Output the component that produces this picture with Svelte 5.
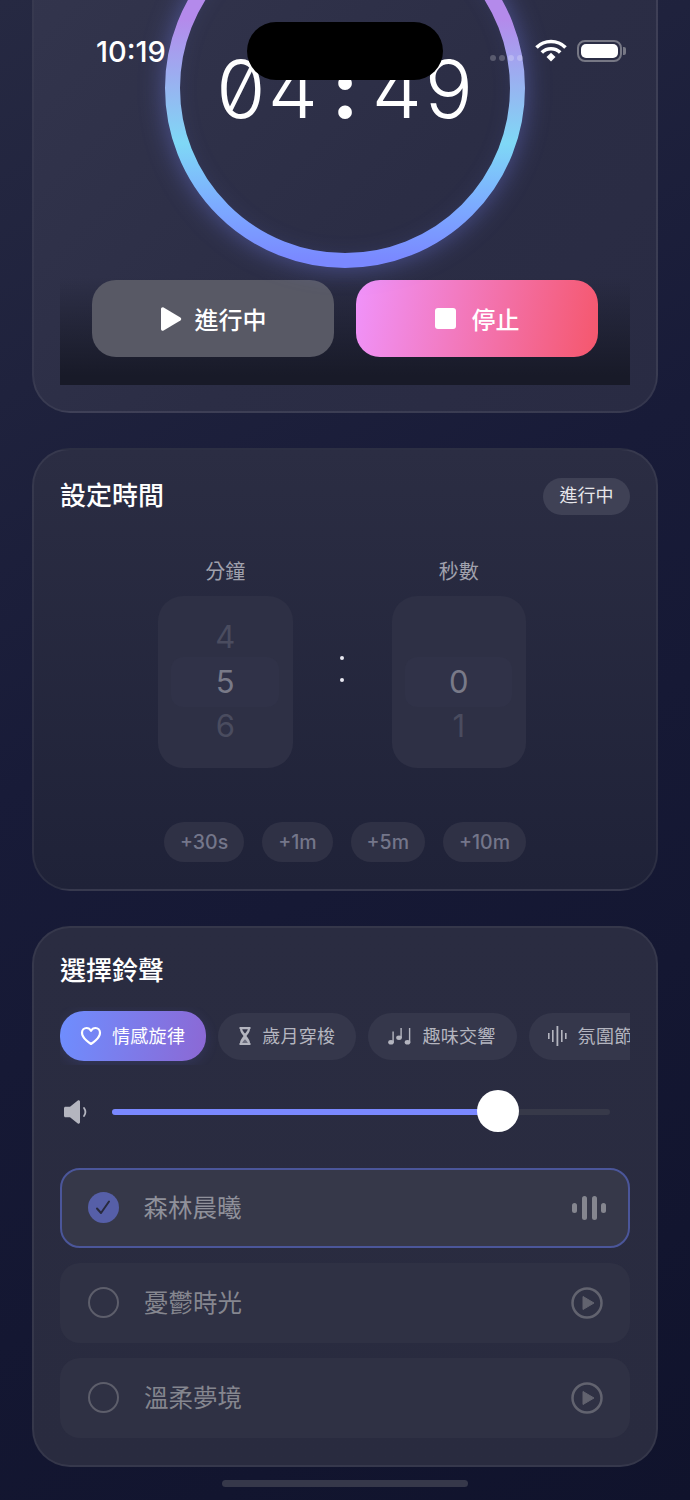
<script>
  const presets = ['+30s', '+1m', '+5m', '+10m'];
  const timeChars = ['0', '4', ':', '4', '9'];
  const sounds = [
    { name: '森林晨曦', active: true },
    { name: '憂鬱時光', active: false },
    { name: '溫柔夢境', active: false }
  ];
</script>

<div class="page">
  <section class="card timer-card">
    <div class="ring">
      <svg class="ring-svg" viewBox="0 0 360 360" width="360" height="360">
        <defs>
          <linearGradient id="ringGrad" x1="0" y1="0" x2="0" y2="1">
            <stop offset="0.3" stop-color="#b48aeb" />
            <stop offset="0.66" stop-color="#7fd8f6" />
            <stop offset="0.84" stop-color="#7cabff" />
            <stop offset="1" stop-color="#7a88ff" />
          </linearGradient>
        </defs>
        <circle cx="180" cy="180" r="172.500" fill="none" stroke="url(#ringGrad)" stroke-width="15" />
      </svg>
      <div class="time">
        {#each timeChars as c}
          <span class:sep={c === ':'}>{c}</span>
        {/each}
      </div>
    </div>
    <div class="actions">
      <button class="btn btn-run">
        <svg width="22" height="26" viewBox="0 0 22 26"><path d="M1 3c0-1.400 1.400-2.200 2.600-1.500l16.800 10c1.100.7 1.100 2.300 0 3L3.600 24.500C2.400 25.200 1 24.400 1 23z" fill="#fff" /></svg>
        <span>進行中</span>
      </button>
      <button class="btn btn-stop">
        <span class="stop-square"></span>
        <span>停止</span>
      </button>
    </div>
  </section>

  <section class="card set-card">
    <header class="head">
      <h2>設定時間</h2>
      <span class="pill">進行中</span>
    </header>
    <div class="picker">
      <div class="col">
        <div class="label">分鐘</div>
        <div class="wheel">
          <div class="hl"></div>
          <div class="n dim">4</div>
          <div class="n cur">5</div>
          <div class="n dim">6</div>
        </div>
      </div>
      <div class="colon"><i></i><i></i></div>
      <div class="col">
        <div class="label">秒數</div>
        <div class="wheel">
          <div class="hl"></div>
          <div class="n dim"></div>
          <div class="n cur">0</div>
          <div class="n dim">1</div>
        </div>
      </div>
    </div>
    <div class="presets">
      {#each presets as p}
        <button class="preset">{p}</button>
      {/each}
    </div>
  </section>

  <section class="card sound-card">
    <h2>選擇鈴聲</h2>
    <div class="tabs">
      <button class="tab on">
        <svg width="22" height="20" viewBox="0 0 22 20"><path d="M11 18S2 12.600 2 6.700C2 3.800 4.200 2 6.500 2 8.500 2 10 3 11 4.800 12 3 13.500 2 15.500 2 17.800 2 20 3.800 20 6.700 20 12.600 11 18 11 18z" fill="none" stroke="#fff" stroke-width="2.200" stroke-linejoin="round" /></svg>
        <span>情感旋律</span>
      </button>
      <button class="tab">
        <svg width="14" height="20" viewBox="0 0 14 20"><path d="M1.500 1h11v2H12c0 3-2.200 5-3.500 7C9.800 12 12 14 12 17h.5v2h-11v-2H2c0-3 2.200-5 3.500-7C4.200 8 2 6 2 3h-.5z" fill="#b4b5bf" /><path d="M4.200 3.200h5.600c-.2 1.400-1.500 2.800-2.800 4.400-1.300-1.600-2.600-3-2.800-4.400z" fill="#33354a" /><path d="M4.200 17c.3-1.200 1.500-2.400 2.800-3.800 1.300 1.400 2.500 2.600 2.800 3.800z" fill="#33354a" opacity=".55" /></svg>
        <span>歲月穿梭</span>
      </button>
      <button class="tab">
        <svg width="24" height="17" viewBox="0 0 24 17" fill="#b4b5bf"><ellipse cx="3" cy="14.300" rx="2.800" ry="2.300" /><rect x="4.400" y="3.500" width="1.400" height="11" /><ellipse cx="11" cy="9.800" rx="2.800" ry="2.200" /><rect x="12.400" y="0" width="1.400" height="10" /><ellipse cx="19.500" cy="14.300" rx="2.800" ry="2.300" /><rect x="20.900" y="0" width="1.400" height="14.500" /></svg>
        <span>趣味交響</span>
      </button>
      <button class="tab">
        <svg width="19" height="20" viewBox="0 0 19 20" fill="#b4b5bf"><rect x="0" y="7" width="1.600" height="6" /><rect x="4" y="4" width="1.600" height="12" /><rect x="8.500" y="0" width="1.800" height="20" /><rect x="13" y="4" width="1.600" height="12" /><rect x="17" y="7" width="1.600" height="6" /></svg>
        <span>氛圍節奏</span>
      </button>
    </div>

    <div class="volume">
      <svg class="vol-icon" width="26" height="26" viewBox="0 0 26 26" fill="#b4b5bf"><path d="M1 9.300c0-.9.600-1.500 1.500-1.500H7l7.800-6.200c.9-.7 2.200-.1 2.200 1.100v20.600c0 1.200-1.300 1.800-2.200 1.100L7 18.200H2.500c-.9 0-1.500-.6-1.500-1.500z" /><path d="M21 9c1.700 2.400 1.700 5.600 0 8" fill="none" stroke="#b4b5bf" stroke-width="1.800" stroke-linecap="round" /></svg>
      <div class="track">
        <div class="fill"></div>
        <div class="thumb"></div>
      </div>
    </div>

    <div class="list">
      {#each sounds as s}
        <div class="row" class:active={s.active}>
          <span class="radio">
            {#if s.active}
              <svg width="16" height="15" viewBox="0 0 16 15"><path d="M2 8.500l4 4.500L14 1.500" fill="none" stroke="#282a3e" stroke-width="2" stroke-linecap="round" stroke-linejoin="round" /></svg>
            {/if}
          </span>
          <span class="name">{s.name}</span>
          {#if s.active}
            <svg class="end" width="34" height="24" viewBox="0 0 34 24" fill="#85868f"><rect x="0" y="7" width="5" height="10" rx="2.500" /><rect x="10" y="0" width="5" height="24" rx="2.500" /><rect x="20" y="0" width="5" height="24" rx="2.500" /><rect x="29" y="7" width="5" height="10" rx="2.500" /></svg>
          {:else}
            <svg class="end play" width="32" height="32" viewBox="0 0 32 32"><circle cx="16" cy="16" r="14.500" fill="none" stroke="#62636f" stroke-width="2.500" /><path d="M12 9.500v13L23 16z" fill="#62636f" stroke="#62636f" stroke-linejoin="round" /></svg>
          {/if}
        </div>
      {/each}
    </div>
  </section>
</div>

<div class="status">
  <span class="clock">10:19</span>
  <div class="dots"><i></i><i></i><i></i><i></i></div>
  <svg class="wifi" width="32" height="23" viewBox="0 0 32 23"><path d="M1.500 8.500a20.500 20.500 0 0 1 29 0" fill="none" stroke="#fff" stroke-width="3.600" /><path d="M6.800 13.500a13 13 0 0 1 18.400 0" fill="none" stroke="#fff" stroke-width="3.600" /><path d="M11.500 18l4.500-4.200L20.500 18 16 22.500z" fill="#fff" /></svg>
  <div class="battery"><div class="batt-body"><div class="batt-fill"></div></div><div class="batt-cap"></div></div>
</div>
<div class="island"></div>
<div class="home"></div>

<style>
  :global(body) {
    margin: 0;
    background: #14173a;
  }
  .page {
    width: 690px;
    height: 1500px;
    overflow: hidden;
    box-sizing: border-box;
    padding: 0 32px;
    display: flex;
    flex-direction: column;
    gap: 35px;
    background: linear-gradient(150deg, #262942 0%, #181b38 42%, #10132c 100%);
    font-family: Inter, "Noto Sans CJK TC", sans-serif;
    color: #fff;
  }
  .card {
    flex: none;
    box-sizing: border-box;
    border: 2px solid rgba(255, 255, 255, 0.06);
    border-radius: 38px;
    padding: 0 26px;
  }
  .timer-card {
    margin-top: -120px;
    padding-top: 26px;
    padding-bottom: 26px;
    background: linear-gradient(135deg, #34364e 0%, #2b2d45 60%, #292b43 100%);
  }
  .ring {
    position: relative;
    width: 360px;
    height: 360px;
    margin: 0 auto;
    border-radius: 50%;
    box-shadow: 0 0 26px rgba(124, 136, 255, 0.42), inset 0 0 30px rgba(124, 136, 255, 0.3);
    display: flex;
    align-items: center;
    justify-content: center;
  }
  .ring-svg {
    position: absolute;
    inset: 0;
  }
  .time {
    position: relative;
    display: flex;
    font-family: Inter, sans-serif;
    font-feature-settings: "zero" 1, "tnum" 1;
    font-weight: 300;
    font-size: 80px;
    line-height: 1;
    color: #fff;
    transform: translateY(1px);
  }
  .time span {
    width: 52px;
    text-align: center;
  }
  .time .sep {
    font-weight: 700;
  }
  .actions {
    display: flex;
    gap: 22px;
    padding: 12px 32px 28px;
    background: linear-gradient(180deg, rgba(24, 26, 40, 0) 8%, #181a28 92%);
  }
  .btn {
    flex: 1;
    height: 77px;
    border: 0;
    border-radius: 24px;
    display: flex;
    align-items: center;
    justify-content: center;
    gap: 13px;
    color: #fff;
    font: 500 24px Inter, "Noto Sans CJK TC", sans-serif;
  }
  .btn-run {
    background: #585965;
  }
  .btn-stop {
    background: linear-gradient(100deg, #f093fb 0%, #f5576c 100%);
    gap: 16px;
  }
  .stop-square {
    width: 21px;
    height: 21px;
    border-radius: 3px;
    background: #fff;
  }
  .set-card {
    padding-top: 27px;
    padding-bottom: 27px;
    background: linear-gradient(180deg, #2b2d43 0%, #1f2238 100%);
  }
  .head {
    display: flex;
    align-items: center;
    justify-content: space-between;
    height: 38px;
  }
  h2 {
    margin: 0;
    font-size: 26px;
    line-height: 38px;
    font-weight: 500;
    color: #fff;
  }
  .pill {
    height: 37px;
    line-height: 36px;
    padding: 0 16.500px;
    border-radius: 19px;
    background: #3f4155;
    font-size: 18px;
    color: #e6e6ea;
  }
  .picker {
    margin-top: 42px;
    padding-right: 6px;
    display: flex;
    justify-content: center;
    align-items: flex-end;
    gap: 45.500px;
  }
  .col {
    width: 134.500px;
  }
  .label {
    text-align: center;
    font-size: 20px;
    line-height: 30px;
    height: 39px;
    color: #a0a1ad;
  }
  .wheel {
    position: relative;
    box-sizing: border-box;
    height: 172px;
    padding-top: 19px;
    border-radius: 25px;
    background: #2e3045;
  }
  .hl {
    position: absolute;
    left: 13px;
    right: 14px;
    top: 61px;
    height: 50px;
    border-radius: 12px;
    background: #303248;
  }
  .n {
    position: relative;
    height: 44.500px;
    line-height: 44px;
    text-align: center;
    font-size: 31px;
  }
  .dim {
    color: #4a4c5f;
  }
  .cur {
    color: #797a88;
  }
  .colon {
    width: 8px;
    height: 172px;
    display: flex;
    flex-direction: column;
    align-items: center;
    gap: 18px;
    padding-top: 60px;
    box-sizing: border-box;
  }
  .colon i {
    width: 4px;
    height: 4px;
    border-radius: 50%;
    background: #e8e8f0;
  }
  .presets {
    margin-top: 54px;
    display: flex;
    justify-content: center;
    gap: 18px;
  }
  .preset {
    height: 40px;
    padding: 0 16px;
    border: 0;
    border-radius: 20px;
    background: #2f3145;
    color: #74768a;
    font: 500 19.500px Inter, sans-serif;
  }
  .sound-card {
    padding-top: 24px;
    padding-bottom: 27px;
    background: linear-gradient(180deg, #2a2c41 0%, #292b3f 100%);
  }
  .tabs {
    margin-top: 17px;
    padding: 4px 0;
    display: flex;
    align-items: center;
    gap: 12px;
    overflow: hidden;
  }
  .tab {
    flex: none;
    height: 47px;
    padding: 0 20.500px 0 19.500px;
    border: 0;
    border-radius: 24px;
    background: #35374b;
    color: #b4b5bf;
    display: flex;
    align-items: center;
    gap: 10.500px;
    font: 400 18px Inter, "Noto Sans CJK TC", sans-serif;
    letter-spacing: 0.300px;
  }
  .tab span {
    margin-right: 0.500px;
    transform: translateY(-1.500px);
  }
  .tab.on {
    height: 50px;
    color: #fff;
    background: linear-gradient(100deg, #6e8eff 0%, #8c68d4 100%);
    box-shadow: 0 3px 14px rgba(110, 130, 255, 0.14);
  }
  .volume {
    margin-top: 25px;
    height: 44px;
    display: flex;
    align-items: center;
  }
  .vol-icon {
    flex: none;
    margin: 0 23px 0 3px;
  }
  .track {
    position: relative;
    width: 498px;
    height: 6px;
    border-radius: 3px;
    background: #373949;
  }
  .fill {
    width: 386px;
    height: 100%;
    border-radius: 3px;
    background: #7a88ff;
  }
  .thumb {
    position: absolute;
    left: 365px;
    top: -19px;
    width: 42px;
    height: 42px;
    border-radius: 50%;
    background: #fff;
  }
  .list {
    margin-top: 34px;
    display: flex;
    flex-direction: column;
    gap: 15.500px;
  }
  .row {
    box-sizing: border-box;
    height: 79.500px;
    padding: 0 23px 0 26px;
    border: 2px solid transparent;
    border-radius: 20px;
    background: #2f3144;
    display: flex;
    align-items: center;
    color: #85868f;
  }
  .row.active {
    background: #363849;
    border: 2.500px solid #4b569a;
    padding: 0 22.500px 0 25.500px;
    color: #8f909a;
  }
  .radio {
    box-sizing: border-box;
    flex: none;
    width: 31px;
    height: 31px;
    border: 2.500px solid #5d5e6b;
    border-radius: 50%;
    display: flex;
    align-items: center;
    justify-content: center;
  }
  .active .radio {
    border: 0;
    background: #565fa8;
  }
  .name {
    margin-left: 25px;
    flex: 1;
    font-size: 24.500px;
    line-height: 30px;
  }
  .end {
    flex: none;
  }
  .play {
    margin-right: 2px;
  }
  .status {
    position: absolute;
    left: 0;
    top: 0;
    width: 690px;
    height: 100px;
  }
  .clock {
    position: absolute;
    left: 96px;
    top: 35px;
    font: 500 29px/34px Inter, sans-serif;
    color: #fff;
  }
  .dots {
    position: absolute;
    left: 490px;
    top: 55px;
    display: flex;
    gap: 3px;
  }
  .dots i {
    width: 6px;
    height: 6px;
    border-radius: 50%;
    background: rgba(255, 255, 255, 0.22);
  }
  .wifi {
    position: absolute;
    left: 535px;
    top: 39px;
  }
  .battery {
    position: absolute;
    left: 577px;
    top: 40px;
    display: flex;
    align-items: center;
    gap: 1px;
  }
  .batt-body {
    box-sizing: border-box;
    width: 45px;
    height: 22px;
    padding: 2px;
    border: 2px solid #777885;
    border-radius: 8px;
  }
  .batt-fill {
    width: 100%;
    height: 100%;
    border-radius: 5px;
    background: #fff;
  }
  .batt-cap {
    width: 2.500px;
    height: 8px;
    border-radius: 0 2px 2px 0;
    background: #777885;
  }
  .island {
    position: absolute;
    left: 247px;
    top: 22px;
    width: 196px;
    height: 58px;
    border-radius: 29px;
    background: #000;
  }
  .home {
    position: absolute;
    left: 222px;
    top: 1480px;
    width: 246px;
    height: 7px;
    border-radius: 4px;
    background: #36384a;
  }
</style>
